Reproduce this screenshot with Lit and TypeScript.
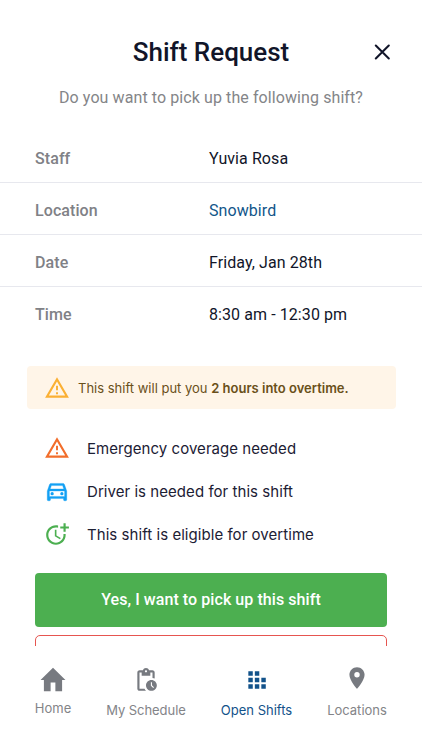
import { LitElement, html, css, svg } from "lit";
import { customElement } from "lit/decorators.js";

const warning = svg`<path d="M12 5.99 19.53 19H4.47L12 5.99M12 2 1 21h22L12 2z"/><path d="M12.9 16h-1.8v1.8h1.8zm0-6h-1.8v4h1.8z"/>`;
const car = svg`<path stroke="currentColor" stroke-width=".3" d="M18.92 6.01C18.72 5.42 18.16 5 17.5 5h-11c-.66 0-1.21.42-1.42 1.01L3 12v8c0 .55.45 1 1 1h1c.55 0 1-.45 1-1v-1h12v1c0 .55.45 1 1 1h1c.55 0 1-.45 1-1v-8l-2.08-5.99zM6.85 7h10.29l1.08 3.11H5.77L6.85 7zM19 17H5v-5h14v5z"/><circle cx="7.5" cy="14.5" r="1.5"/><circle cx="16.5" cy="14.5" r="1.5"/>`;
const moreTime = svg`<path d="M10 8v6l4.7 2.9.8-1.2-4-2.4V8z"/><path d="M17.92 12c.05.33.08.66.08 1 0 3.9-3.1 7-7 7s-7-3.1-7-7 3.1-7 7-7c.7 0 1.37.1 2 .29V4.23C12.36 4.08 11.69 4 11 4c-5 0-9 4-9 9s4 9 9 9 9-4 9-9c0-.34-.02-.67-.06-1z"/><path d="M20 5V2h-2v3h-3v2h3v3h2V7h3V5z"/>`;
const home = svg`<path d="M9.8 22.3v-8h4.4v8h6.2V12.1h3.1L12 .8.5 12.1h3.1v10.2z"/>`;
const pending = svg`<path d="M17 12c-2.76 0-5 2.24-5 5s2.24 5 5 5 5-2.24 5-5-2.24-5-5-5zm1.65 7.35L16.5 17.2V14h1v2.79l1.85 1.85-.7.71zM18 3h-3.18C14.4 1.84 13.3 1 12 1s-2.4.84-2.82 2H6c-1.1 0-2 .9-2 2v15c0 1.1.9 2 2 2h6.11c-.59-.57-1.07-1.25-1.42-2H6V5h2v3h8V5h2v5.08c.71.1 1.38.31 2 .6V5c0-1.1-.9-2-2-2zm-6 2c-.55 0-1-.45-1-1s.45-1 1-1 1 .45 1 1-.45 1-1 1z"/>`;
const blocks = svg`<path d="M4 4h4.1v4.1H4zM10 4h4.1v4.1H10zM4 10h4.1v4.1H4zM10 10h4.1v4.1H10zM16 10h4.1v4.1H16zM4 16h4.1v4.1H4zM10 16h4.1v4.1H10zM16 16h4.1v4.1H16z"/>`;
const pin = svg`<path d="M12 2C8.13 2 5 5.13 5 9c0 5.25 7 13 7 13s7-7.75 7-13c0-3.87-3.13-7-7-7zm0 9.5a2.5 2.5 0 1 1 0-5 2.5 2.5 0 0 1 0 5z"/>`;

const details = [
  { label: "Staff", value: "Yuvia Rosa", cls: "v-staff" },
  { label: "Location", value: "Snowbird", cls: "link" },
  { label: "Date", value: "Friday, Jan 28th", cls: "v-date" },
  { label: "Time", value: "8:30 am - 12:30 pm", cls: "v-time" },
];
const notes = [
  { icon: warning, cls: "orange", text: "Emergency coverage needed" },
  { icon: car, cls: "blue", text: "Driver is needed for this shift" },
  { icon: moreTime, cls: "green", text: "This shift is eligible for overtime" },
];
const tabs = [
  { icon: home, label: "Home", cls: "t-home" },
  { icon: pending, label: "My Schedule", cls: "t-sched" },
  { icon: blocks, label: "Open Shifts", cls: "t-open" },
  { icon: pin, label: "Locations", cls: "t-loc" },
];

@customElement("app-root")
export class AppRoot extends LitElement {
  static styles = css`
    :host { display: flex; flex-direction: column; height: 750px; overflow: hidden; background: #fff; color: #111529; font-family: Roboto, sans-serif; }
    * { box-sizing: border-box; }
    svg { display: block; fill: currentColor; flex: none; }
    .scroll { height: 646px; overflow: hidden; flex: none; }
    header { display: grid; grid-template-columns: 52px 1fr 52px; align-items: center; height: 32px; margin-top: 36px; padding: 0 14px; }
    h1 { grid-column: 2; margin: 0; text-align: center; font-size: 26px; line-height: 32px; font-weight: 500; white-space: nowrap; }
    .close { border: 0; background: none; padding: 0; color: inherit; justify-self: center; }
    .sub { margin: 20px 0 0; height: 20px; line-height: 20px; font-size: 16px; letter-spacing: 0.09px; text-align: center; color: #848588; }
    .details { margin: 23px 0 0; }
    .row { display: grid; grid-template-columns: 174px 1fr; align-items: center; height: 52px; padding: 4px 35px 0; border-bottom: 1px solid #e7e8ee; font-size: 16px; letter-spacing: 0.08px; }
    .row:last-child { border-bottom-color: transparent; }
    dt { color: #808186; font-weight: 500; }
    dd { margin: 0; }
    .link { color: #12568a; }
    .alert { display: flex; align-items: center; gap: 8.5px; height: 43px; margin: 27px 26px 0 27px; padding-left: 16.5px; border-radius: 4px; background: #fff5e8; color: #6a5019; font: 13px Inter, sans-serif; }
    .alert svg { color: #fbb034; }
    .alert b { font-weight: 600; }
    .notes { list-style: none; margin: 18px 0 0; padding: 0 43.5px; }
    .notes li { display: flex; align-items: center; gap: 17.5px; height: 43.2px; font: 15px Inter, sans-serif; letter-spacing: 0.05px; color: #1c2034; }
    .notes svg { margin-bottom: 1.4px; }
    .orange { color: #f26e2b; } .blue { color: #12a0f4; } .green { color: #4caf50; }
    .yes, .no { display: block; width: 352px; height: 54px; margin: 16.4px 0 0 35px; padding: 1px 0 0; border: 0; border-radius: 4px; background: #4caf50; color: #fff; font: 500 16px/20px Roboto, sans-serif; letter-spacing: 0.07px; }
    .no { margin-top: 8.5px; border: 1px solid #e65550; background: #fff; border-radius: 5px; }
    nav { display: grid; grid-template-columns: 88px 98px 123px 78px; padding: 21px 9px 0; }
    .tab { display: flex; flex-direction: column; align-items: center; color: #777a80; font: 13px/18px Inter, sans-serif; white-space: nowrap; }
    .tab span { margin-top: 8px; color: #838488; }
    .tab.t-home span { margin-top: 6px; }
    .tab.t-loc { margin-top: -2px; }
    .tab.t-loc span { margin-top: 10px; }
    .tab.t-sched { letter-spacing: -0.06px; }
    .tab.t-open, .tab.t-open span { color: #12528a; }
  `;

  icon(shape: unknown, size = 26, cls = "") {
    return html`<svg class=${cls} width=${size} height=${size} viewBox="0 0 24 24" aria-hidden="true">${shape}</svg>`;
  }

  render() {
    return html`
      <div class="scroll">
        <header>
          <h1>Shift Request</h1>
          <button class="close" aria-label="Close">
            <svg width="16" height="16" viewBox="0 0 16 16"><path d="M1.8 1.5l13 13M14.8 1.5l-13 13" stroke="currentColor" stroke-width="2" stroke-linecap="round"/></svg>
          </button>
        </header>
        <p class="sub"><span>Do you want to pick up the following shift?</span></p>
        <dl class="details">
          ${details.map((d) => html`<div class="row"><dt>${d.label}</dt><dd class=${d.cls}>${d.value}</dd></div>`)}
        </dl>
        <div class="alert">${this.icon(warning)}<span>This shift will put you <b>2 hours into overtime.</b></span></div>
        <ul class="notes">
          ${notes.map((n) => html`<li>${this.icon(n.icon, 26, n.cls)}<span>${n.text}</span></li>`)}
        </ul>
        <button class="yes">Yes, I want to pick up this shift</button>
        <button class="no" aria-label="Decline"></button>
      </div>
      <nav>
        ${tabs.map((t) => html`<div class="tab ${t.cls}">${this.icon(t.icon)}<span>${t.label}</span></div>`)}
      </nav>
    `;
  }
}
